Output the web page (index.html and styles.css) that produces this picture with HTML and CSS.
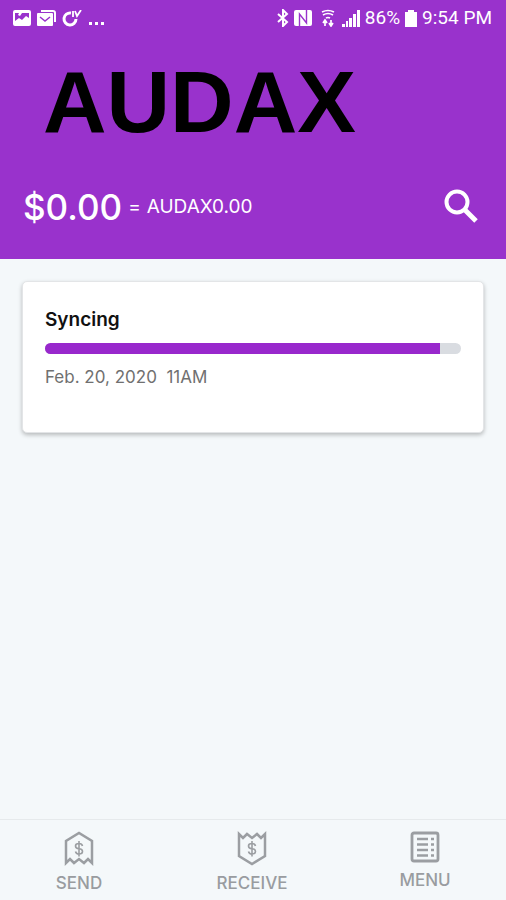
FILE: index.html
```html
<!DOCTYPE html>
<html lang="en">
<head>
<meta charset="utf-8">
<meta name="viewport" content="width=device-width, initial-scale=1">
<title>Audax Wallet</title>
<link rel="stylesheet" href="styles.css">
</head>
<body>
<header class="header">
  <div class="status">
    <div class="status-group">
      <svg width="18" height="16" viewBox="0 0 18 16" aria-hidden="true"><path fill="#fff" fill-rule="evenodd" d="M2 0h14q2 0 2 2v12q0 2-2 2H2q-2 0-2-2V2q0-2 2-2zM2 3v8l4-3 3 2 4-4 3 2V3H9l-2 3-2-1 1-2z"/></svg>
      <svg width="19" height="16" viewBox="0 0 19 16" aria-hidden="true"><path d="M4 1h12q2 0 2 2v9" fill="none" stroke="#fff" stroke-width="2"/><rect y="3" width="16" height="13" rx="1" fill="#fff"/><path d="M3 7l5 4 5-4" fill="none" stroke="#9932cc" stroke-width="1.5"/></svg>
      <svg width="21" height="17" viewBox="0 0 21 17" aria-hidden="true"><path d="M9 3a6 6 0 1 0 5 6" fill="none" stroke="#fff" stroke-width="3"/><path d="M11 1v6M13 1l2 5 4-6" fill="none" stroke="#fff" stroke-width="1.8"/></svg>
      <svg width="16" height="16" viewBox="0 0 16 16" aria-hidden="true"><path d="M0 12h3v3H0zM6 12h3v3H6zM12 12h3v3h-3z" fill="#fff"/></svg>
    </div>
    <div class="status-group status-right">
      <svg width="12" height="18" viewBox="0 0 12 18" aria-hidden="true"><path d="M1 5l9 8-4 4V1l4 4-9 8" fill="none" stroke="#fff" stroke-width="2"/></svg>
      <svg width="18" height="18" viewBox="0 0 18 18" aria-hidden="true"><rect y="1" width="18" height="16" rx="2" fill="#fff"/><path d="M5.500 17V5l7 9V1" fill="none" stroke="#9932cc" stroke-width="1.4"/></svg>
      <svg class="wifi" width="14" height="18" viewBox="0 0 14 18" aria-hidden="true"><path d="M1 3q6-3 12 0M2 6q5-3 10 0M5 9q2-1 4 0" fill="none" stroke="#fff" stroke-width="1.7"/><path d="M4 17v-5M2 14l2-3 2 3M10 11v5M8 14l2 3 2-3" fill="none" stroke="#fff" stroke-width="1.7"/></svg>
      <svg width="18" height="17" viewBox="0 0 18 17" aria-hidden="true"><path fill="#fff" d="M0 14h3v3H0zM4 11h2v6H4zM7 8h3v9H7zM11 4h3v13h-3zM15 0h3v17h-3z"/></svg>
      <span class="status-text">86%</span>
      <svg width="12" height="18" viewBox="0 0 12 18" aria-hidden="true"><path fill="#fff" d="M3 1h6v2h3v15H0V3h3z"/></svg>
      <span class="status-text">9:54 PM</span>
    </div>
  </div>
  <h1 class="brand">AUDAX</h1>
  <div class="balance">
    <p class="amounts"><span class="fiat">$0.00</span><span class="coin">=</span><span class="coin">AUDAX0.00</span></p>
    <button class="search" type="button" aria-label="Search">
      <svg width="36" height="36" viewBox="0 0 36 36" aria-hidden="true"><circle cx="13" cy="13" r="10.5" fill="none" stroke="#fff" stroke-width="4"/><path d="M20.500 20.500L32 32" stroke="#fff" stroke-width="5"/></svg>
    </button>
  </div>
</header>
<main class="content">
  <section class="card">
    <h2 class="card-title" id="sync">Syncing</h2>
    <progress class="bar" aria-labelledby="sync" value="95" max="100"></progress>
    <p class="date">Feb. 20, 2020&nbsp; 11AM</p>
  </section>
</main>
<nav class="tabs">
  <a class="tab" href="#send">
    <svg width="30" height="36" viewBox="0 0 30 36" aria-hidden="true"><path d="M2 33V11L15 3l13 8v22l-4-4-4 4-5-4-5 4-4-4z" fill="none" stroke="#9b9ea2" stroke-width="2.5"/><path d="M18.500 16q-.5-2.500-3.500-2.500-3.500 0-3.500 2.500t3.500 2.700 3.500 2.800q0 2.500-3.500 2.500-3 0-3.500-2.500M15 11v15.500" fill="none" stroke="#9b9ea2" stroke-width="1.6"/></svg>
    <span>SEND</span>
  </a>
  <a class="tab" href="#receive">
    <svg width="30" height="36" viewBox="0 0 30 36" aria-hidden="true"><path d="M2 4v22l13 8 13-8V4l-4 4-4-4-5 4-5-4-4 4z" fill="none" stroke="#9b9ea2" stroke-width="2.5"/><path d="M18.500 16q-.5-2.500-3.500-2.500-3.500 0-3.500 2.500t3.500 2.700 3.500 2.800q0 2.500-3.500 2.500-3 0-3.500-2.500M15 11v15.500" fill="none" stroke="#9b9ea2" stroke-width="1.6"/></svg>
    <span>RECEIVE</span>
  </a>
  <a class="tab" href="#menu">
    <svg width="30" height="33" viewBox="0 0 30 33" aria-hidden="true"><rect x="2" y="3" width="26" height="28" rx="2" fill="none" stroke="#9b9ea2" stroke-width="2.8"/><path d="M7 9h11M7 14.500h11M7 20h11M7 25.500h11M21 9h3M21 14.500h3M21 20h3M21 25.500h3" stroke="#9b9ea2" stroke-width="2.5"/></svg>
    <span>MENU</span>
  </a>
</nav>
</body>
</html>
```
FILE: styles.css
```css
* {
  box-sizing: border-box;
}

body {
  margin: 0;
  min-height: 100vh;
  display: flex;
  flex-direction: column;
  background: #f4f8fa;
  font-family: Inter, "Liberation Sans", sans-serif;
}

h1, h2, p {
  margin: 0;
}

svg {
  display: block;
  flex: none;
}

.header {
  background: #9932cc;
  color: #fff;
  padding-bottom: 30px;
}

.status {
  display: flex;
  justify-content: space-between;
  align-items: center;
  height: 36px;
  padding: 0 14px 0 13px;
}

.status-group {
  display: flex;
  align-items: center;
  gap: 6px;
}

.status-right {
  gap: 5px;
}

.wifi {
  margin: 0 2px 0 4px;
}

.status-text {
  font: 19px/24px Roboto, sans-serif;
}

.brand {
  padding: 16px 0 0 43px;
  color: #000;
  font: bold 88px/100px "Liberation Sans", sans-serif;
}

.balance {
  display: flex;
  justify-content: space-between;
  align-items: center;
  margin-top: 33px;
  padding: 0 26px 0 23px;
}

.amounts {
  display: flex;
  align-items: center;
  gap: 6px;
}

.fiat {
  font-size: 35px;
  font-weight: 500;
  line-height: 44px;
}

.coin {
  font-size: 19px;
  line-height: 40px;
}

.search {
  padding: 0;
  border: 0;
  background: none;
}

.content {
  flex: 1;
  padding: 22px;
}

.card {
  min-height: 152px;
  padding: 26px 22px;
  border: 1px solid #e3e5e7;
  border-radius: 5px;
  background: #fff;
  box-shadow: 0 2px 4px rgba(0, 0, 0, 0.25);
}

.card-title {
  color: #111;
  font-size: 19px;
  font-weight: 600;
  line-height: 24px;
}

.bar {
  display: block;
  width: 100%;
  height: 11px;
  margin: 11px 0 13px;
  overflow: hidden;
  appearance: none;
  border: 0;
  border-radius: 6px;
  background: #d9dce1;
}

.bar::-webkit-progress-bar {
  background: #d9dce1;
}

.bar::-webkit-progress-value {
  background: #9828cc;
}

.date {
  color: #707070;
  font-size: 17px;
  line-height: 20px;
}

.tabs {
  display: flex;
  justify-content: space-between;
  height: 81px;
  padding: 10px 21px 0 19px;
  border-top: 1px solid #e6eaec;
}

.tab {
  display: flex;
  flex-direction: column;
  align-items: center;
  gap: 6px;
  width: 120px;
  color: #999ca0;
  font-size: 17px;
  font-weight: 500;
  line-height: 22px;
  text-decoration: none;
}
```
